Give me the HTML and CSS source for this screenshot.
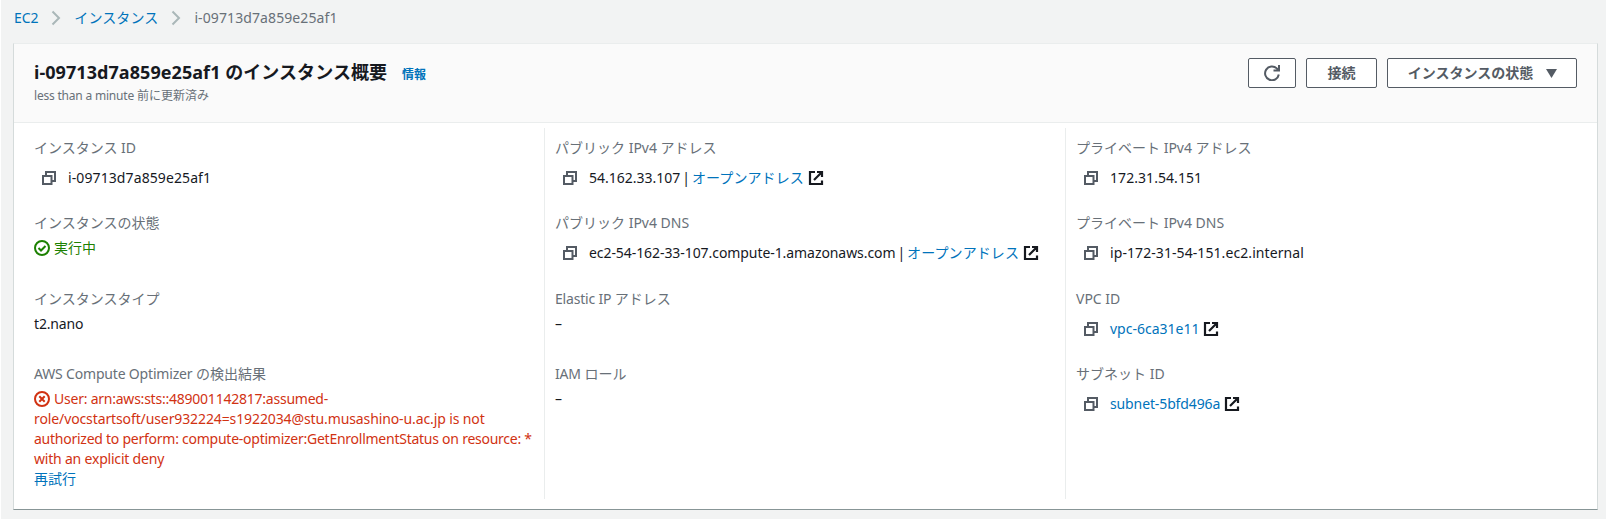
FILE: index.html
```html
<!DOCTYPE html>
<html lang="ja">
<head>
<meta charset="utf-8">
<title>EC2</title>
<link rel="stylesheet" href="styles.css">
</head>
<body>
<svg class="defs" width="0" height="0">
  <symbol id="copy" viewBox="0 0 16 16"><path d="M2 6h8.500v8H2zM5 6V2h9v9H10.500" fill="none" stroke="#545b64" stroke-width="2"/></symbol>
  <symbol id="ext" viewBox="0 0 16 16"><path d="M7 2H2v12h12V10.500M9 2h5v5M13.500 2.500L6 10" fill="none" stroke="#16191f" stroke-width="2.200"/></symbol>
  <symbol id="sep" viewBox="0 0 10 16"><path d="M1.500 1.500L8 8l-6.500 6.500" fill="none" stroke="#aab7b8" stroke-width="2"/></symbol>
</svg>
<div class="page">
  <nav class="crumbs">
    <a class="c1">EC2</a><svg class="sep"><use href="#sep"/></svg>
    <a class="c2">インスタンス</a><svg class="sep"><use href="#sep"/></svg>
    <span class="id">i-09713d7a859e25af1</span>
  </nav>
  <section class="card">
    <header class="head">
      <div>
        <div class="title-row"><h1><span class="title-id">i-09713d7a859e25af1</span> のインスタンス概要</h1><a class="info">情報</a></div>
        <p class="updated"><span class="updated-en">less than a minute</span> 前に更新済み</p>
      </div>
      <div class="actions">
        <button class="btn refresh"><svg width="16" height="16" viewBox="0 0 16 16"><path d="M14.800 9.500A6.900 6.900 0 1 1 12.800 3.400L14.500 5M15 0v5.500H9.500" fill="none" stroke="#545b64" stroke-width="2"/></svg></button>
        <button class="btn connect">接続</button>
        <button class="btn state">インスタンスの状態<svg width="11" height="9" viewBox="0 0 11 9"><path d="M0 0h11L5.500 9z" fill="#545b64"/></svg></button>
      </div>
    </header>
    <div class="cols">
      <div class="col">
        <div class="item"><div class="label">インスタンス ID</div><div class="value copyable"><svg class="copy"><use href="#copy"/></svg><span class="id">i-09713d7a859e25af1</span></div></div>
        <div class="item"><div class="label">インスタンスの状態</div><div class="value ok"><svg class="status" viewBox="0 0 16 16"><circle cx="8" cy="8" r="7" fill="none" stroke="#1d8102" stroke-width="2"/><path d="M4.500 8l2.500 2.500 4.500-4.500" fill="none" stroke="#1d8102" stroke-width="2"/></svg>実行中</div></div>
        <div class="item"><div class="label">インスタンスタイプ</div><div class="value type">t2.nano</div></div>
        <div class="item"><div class="label"><span class="optimizer">AWS Compute Optimizer</span> の検出結果</div><div class="value err"><svg class="status" viewBox="0 0 16 16"><circle cx="8" cy="8" r="7" fill="none" stroke="#d13212" stroke-width="2"/><path d="M5.300 5.300l5.400 5.400M10.700 5.300l-5.400 5.400" fill="none" stroke="#d13212" stroke-width="2"/></svg><span class="e1">User: arn:aws:sts::489001142817:assumed-</span><br><span class="e2">role/vocstartsoft/user932224=s1922034@stu.musashino-u.ac.jp is not</span><br><span class="e3">authorized to perform: compute-optimizer:GetEnrollmentStatus on resource: *</span><br><span class="e4">with an explicit deny</span><br><a>再試行</a></div></div>
      </div>
      <div class="col">
        <div class="item"><div class="label">パブリック IPv4 アドレス</div><div class="value copyable"><svg class="copy"><use href="#copy"/></svg><span class="open">54.162.33.107 | <a>オープンアドレス</a></span><svg class="ext"><use href="#ext"/></svg></div></div>
        <div class="item"><div class="label">パブリック IPv4 DNS</div><div class="value copyable"><svg class="copy"><use href="#copy"/></svg><span class="open"><span class="dns">ec2-54-162-33-107.compute-1.amazonaws.com</span> | <a>オープンアドレス</a></span><svg class="ext"><use href="#ext"/></svg></div></div>
        <div class="item"><div class="label"><span class="elastic">Elastic IP</span> アドレス</div><div class="value">–</div></div>
        <div class="item"><div class="label"><span class="elastic">IAM</span> ロール</div><div class="value">–</div></div>
      </div>
      <div class="col">
        <div class="item"><div class="label">プライベート IPv4 アドレス</div><div class="value copyable"><svg class="copy"><use href="#copy"/></svg><span class="pip">172.31.54.151</span></div></div>
        <div class="item"><div class="label">プライベート IPv4 DNS</div><div class="value copyable"><svg class="copy"><use href="#copy"/></svg><span class="pdns">ip-172-31-54-151.ec2.internal</span></div></div>
        <div class="item"><div class="label">VPC ID</div><div class="value copyable"><svg class="copy"><use href="#copy"/></svg><a>vpc-6ca31e11</a><svg class="ext"><use href="#ext"/></svg></div></div>
        <div class="item"><div class="label">サブネット ID</div><div class="value copyable"><svg class="copy"><use href="#copy"/></svg><a class="subnet">subnet-5bfd496a</a><svg class="ext"><use href="#ext"/></svg></div></div>
      </div>
    </div>
  </section>
</div>
</body>
</html>
```
FILE: styles.css
```css
* { box-sizing: border-box; }
body {
  margin: 0;
  background: #fff;
  color: #16191f;
  font: 14px/20px "Noto Sans", "Noto Sans CJK JP", sans-serif;
  white-space: nowrap;
}
.defs { display: none; }
.page { height: 519px; margin-left: 1px; padding: 8px 8px 0 12px; background: #f2f3f3; }
a { color: #0073bb; }
.crumbs { display: flex; align-items: center; height: 20px; padding-left: 1px; color: #687078; }
.sep { width: 10px; height: 16px; margin: 0 13px; }
.c1 { letter-spacing: -0.1px; }
.c2 { letter-spacing: 0.1px; }
.id { letter-spacing: 0.1px; }
.card {
  height: 467px;
  margin-top: 15px;
  background: #fff;
  border: 1px solid #d5dbdb;
  border-top-color: #eaeded;
  border-bottom: 1px solid #879596;
}
.head {
  display: flex;
  justify-content: space-between;
  height: 79px;
  padding: 14px 20px 0 20px;
  background: #fafafa;
  border-bottom: 1px solid #eaeded;
}
.title-row { display: flex; align-items: baseline; height: 30px; }
h1 { margin: 0; font-size: 18px; line-height: 29px; font-weight: 700; letter-spacing: 0.06px; }
.info { margin-left: 15px; font-size: 12px; font-weight: 600; }
.updated { margin: 0; font-size: 12px; line-height: 16px; color: #687078; }
.updated-en { letter-spacing: -0.2px; }
.actions { display: flex; gap: 10px; }
.btn {
  display: flex;
  align-items: center;
  justify-content: center;
  height: 30px;
  padding: 0;
  background: #fff;
  border: 1px solid #545b64;
  border-radius: 2px;
  color: #545b64;
  font: 700 14px/20px "Noto Sans", "Noto Sans CJK JP", sans-serif;
}
.refresh { width: 48px; }
.connect { width: 71px; }
.state { width: 190px; padding-left: 1px; gap: 13px; }
.cols { display: grid; grid-template-columns: 520px 521px 1fr; height: 371px; margin: 5px 0 0 10px; }
.col { padding: 10px 0 0 10px; }
.col + .col { border-left: 1px solid #eaeded; }
.item { height: 75.300px; }
.label { height: 20px; color: #687078; }
.value { padding-top: 5px; }
.copyable { display: flex; align-items: center; height: 40px; padding: 0 0 0 7px; }
.copy { width: 16px; height: 16px; margin-right: 11px; }
.ext { width: 16px; height: 16px; margin-left: 4px; }
.status { width: 16px; height: 16px; margin-right: 4px; vertical-align: -3px; }
.ok { color: #1d8102; }
.err { color: #d13212; }
.type { letter-spacing: -0.15px; }
.optimizer { letter-spacing: -0.18px; }
.e1 { letter-spacing: -0.23px; }
.e2 { letter-spacing: -0.11px; }
.e3 { letter-spacing: -0.25px; }
.e4 { letter-spacing: -0.2px; }
.open { word-spacing: -1.7px; }
.open a { letter-spacing: 0.1px; }
.dns { letter-spacing: -0.07px; }
.elastic { letter-spacing: -0.2px; }
.pip { letter-spacing: 0.06px; }
.pdns { letter-spacing: 0.08px; }
.subnet { letter-spacing: -0.12px; }
```
